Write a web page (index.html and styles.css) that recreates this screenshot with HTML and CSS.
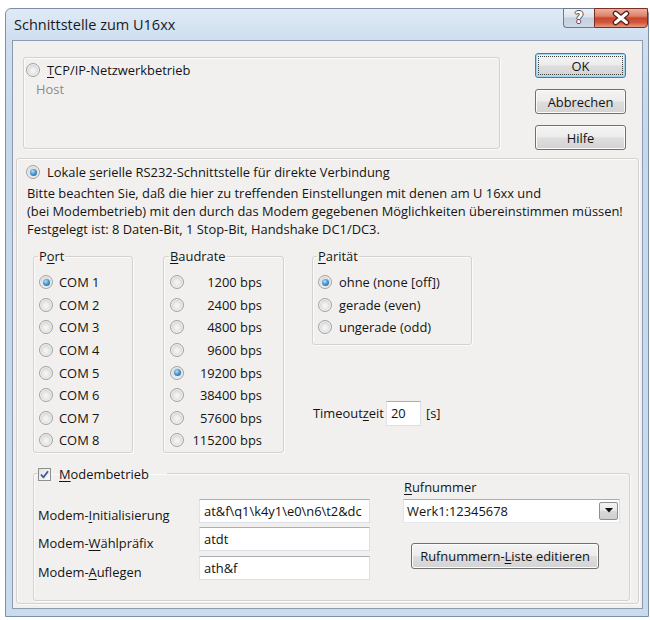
FILE: index.html
```html
<!DOCTYPE html>
<html lang="de">
<head>
<meta charset="utf-8">
<title>Schnittstelle zum U16xx</title>
<link rel="stylesheet" href="styles.css">
</head>
<body>
<div class="window">
  <div class="titlebar">
    <span class="caption">Schnittstelle zum U16xx</span>
    <div class="caption-buttons">
      <span class="cap-btn help"><span class="help-glyph">?</span></span>
      <span class="cap-btn close">
        <svg width="24" height="16" viewBox="0 0 24 16">
          <path d="M6.5 3.5 L17.5 12.5 M17.5 3.5 L6.5 12.5" stroke="#5b2218" stroke-width="5.6" stroke-linecap="round"/>
          <path d="M6.5 3.5 L17.5 12.5 M17.5 3.5 L6.5 12.5" stroke="#ffffff" stroke-width="3" stroke-linecap="round"/>
        </svg>
      </span>
    </div>
  </div>

  <div class="client">
    <div class="top-row">
      <div class="group tcp">
        <div class="opt"><span class="radio"></span><span><u>T</u>CP/IP-Netzwerkbetrieb</span></div>
        <div class="host">Host</div>
      </div>
      <div class="actions">
        <button class="btn default"><span class="focus-ring">OK</span></button>
        <button class="btn">Abbrechen</button>
        <button class="btn">Hilfe</button>
      </div>
    </div>

    <div class="group serial">
      <div class="opt"><span class="radio on"></span><span>Lokale <u>s</u>erielle RS232-Schnittstelle für direkte Verbindung</span></div>
      <p class="note">Bitte beachten Sie, daß die hier zu treffenden Einstellungen mit denen am U 16xx und<br>(bei Modembetrieb) mit den durch das Modem gegebenen Möglichkeiten übereinstimmen müssen!<br>Festgelegt ist: 8 Daten-Bit, 1 Stop-Bit, Handshake DC1/DC3.</p>

      <div class="settings">
        <fieldset class="box port">
          <legend>P<u>o</u>rt</legend>
          <div class="row"><span class="radio on"></span><span>COM 1</span></div>
          <div class="row"><span class="radio"></span><span>COM 2</span></div>
          <div class="row"><span class="radio"></span><span>COM 3</span></div>
          <div class="row"><span class="radio"></span><span>COM 4</span></div>
          <div class="row"><span class="radio"></span><span>COM 5</span></div>
          <div class="row"><span class="radio"></span><span>COM 6</span></div>
          <div class="row"><span class="radio"></span><span>COM 7</span></div>
          <div class="row"><span class="radio"></span><span>COM 8</span></div>
        </fieldset>

        <fieldset class="box baud">
          <legend><u>B</u>audrate</legend>
          <div class="row"><span class="radio"></span><span class="rate">1200 bps</span></div>
          <div class="row"><span class="radio"></span><span class="rate">2400 bps</span></div>
          <div class="row"><span class="radio"></span><span class="rate">4800 bps</span></div>
          <div class="row"><span class="radio"></span><span class="rate">9600 bps</span></div>
          <div class="row"><span class="radio on"></span><span class="rate">19200 bps</span></div>
          <div class="row"><span class="radio"></span><span class="rate">38400 bps</span></div>
          <div class="row"><span class="radio"></span><span class="rate">57600 bps</span></div>
          <div class="row"><span class="radio"></span><span class="rate">115200 bps</span></div>
        </fieldset>

        <div class="side">
          <fieldset class="box parity">
            <legend><u>P</u>arität</legend>
            <div class="row"><span class="radio on"></span><span>ohne (none [off])</span></div>
            <div class="row"><span class="radio"></span><span>gerade (even)</span></div>
            <div class="row"><span class="radio"></span><span>ungerade (odd)</span></div>
          </fieldset>
          <div class="timeout">
            <span class="timeout-label">Timeout<u>z</u>eit</span>
            <span class="field small">20</span>
            <span class="unit">[s]</span>
          </div>
        </div>
      </div>

      <fieldset class="box modem">
        <legend><span class="check"><svg width="11" height="11" viewBox="0 0 11 11"><path d="M2 5.5 L4.5 8.3 L9 2.2" fill="none" stroke="#3f5a93" stroke-width="1.8" stroke-linejoin="round"/></svg></span><span><u>M</u>odembetrieb</span></legend>
        <div class="modem-body">
          <div class="modem-fields">
            <span class="flabel">Modem-<u>I</u>nitialisierung</span>
            <span class="field">at&amp;f\q1\k4y1\e0\n6\t2&amp;dc</span>
            <span class="flabel">Modem-<u>W</u>ählpräfix</span>
            <span class="field">atdt</span>
            <span class="flabel">Modem-<u>A</u>uflegen</span>
            <span class="field">ath&amp;f</span>
          </div>
          <div class="dial">
            <span class="dial-label"><u>R</u>ufnummer</span>
            <div class="combo">
              <span class="combo-text">Werk1:12345678</span>
              <span class="combo-arrow"><svg width="8" height="5" viewBox="0 0 8 5"><path d="M0 0 H8 L4 4.5 Z" fill="#111"/></svg></span>
            </div>
            <button class="btn wide">Rufnummern-<u>L</u>iste editieren</button>
          </div>
        </div>
      </fieldset>
    </div>
  </div>
</div>
</body>
</html>
```

FILE: styles.css
```css
html, body {
  margin: 0;
  background: #ffffff;
}

body {
  font-family: "Open Sans", "Noto Sans", sans-serif;
  font-size: 12.9px;
  color: #141414;
}

u {
  text-decoration-thickness: 1px;
  text-underline-offset: 2px;
}

/* window frame */
.window {
  margin: 8px 0 0 5px;
  width: 644px;
  height: 609px;
  box-sizing: border-box;
  border: 1px solid #7d8fa6;
  border-radius: 6px 6px 0 0;
  background: linear-gradient(180deg, #dfeaf6 0, #cfdff0 30px, #c7d8ec 120px, #cadbee 100%);
  display: flex;
  flex-direction: column;
}

.titlebar {
  height: 31px;
  display: flex;
  align-items: flex-start;
  padding-left: 8px;
}

.caption {
  font-size: 14.5px;
  line-height: 31px;
  color: #1a1a1a;
}

.caption-buttons {
  margin-left: auto;
  margin-top: -1px;
  display: flex;
}

.cap-btn {
  height: 20px;
  box-sizing: border-box;
  display: flex;
  align-items: center;
  justify-content: center;
  border: 1px solid #6c7a8d;
}

.help {
  width: 31px;
  border-right: none;
  border-radius: 0 0 0 4px;
  background: linear-gradient(180deg, #eef2f7 0, #dbe3ed 45%, #c3cfdd 50%, #cfdae7 100%);
}

.help-glyph {
  font-family: "DejaVu Sans", sans-serif;
  font-weight: bold;
  font-size: 15px;
  line-height: 15px;
  color: #ffffff;
  text-shadow: 1px 0 0 #4a4f57, -1px 0 0 #4a4f57, 0 1px 0 #4a4f57, 0 -1px 0 #4a4f57;
}

.close {
  width: 54px;
  border-color: #7e2d20;
  border-radius: 0 0 4px 0;
  background: linear-gradient(180deg, #eab2a2 0, #dc8168 40%, #c9452c 50%, #d1583c 75%, #e79a7f 100%);
}

/* client area */
.client {
  flex: 1;
  margin: 0 5px 7px 6px;
  border: 1px solid #8c9cb0;
  background: #f2f0ee;
  padding: 0 3px 4px 3px;
  display: flex;
  flex-direction: column;
}

.group {
  box-sizing: border-box;
  border: 1px solid #d4d2ce;
  border-radius: 3px;
  box-shadow: inset 1px 1px 0 #fbfbfa, 1px 1px 0 #fbfbfa;
}

.top-row {
  height: 117px;
  display: flex;
  align-items: flex-start;
}

.tcp {
  width: 477px;
  height: 92px;
  margin: 16px 0 0 7px;
  padding: 3px 2px;
}

.opt {
  display: flex;
  align-items: center;
  gap: 7px;
  line-height: 18px;
  white-space: nowrap;
}

.host {
  color: #8b8b8b;
  margin: 1px 0 0 10px;
  line-height: 18px;
}

.actions {
  margin: 12px 13px 0 auto;
  display: flex;
  flex-direction: column;
  gap: 11px;
}

.btn {
  font: inherit;
  color: #141414;
  width: 91px;
  height: 25px;
  padding: 0;
  box-sizing: border-box;
  border: 1px solid #707070;
  border-radius: 3px;
  background: linear-gradient(180deg, #f4f4f4 0, #ececec 48%, #dedede 52%, #d3d3d3 100%);
  box-shadow: inset 0 0 0 1px #fbfbfb;
  display: flex;
  align-items: center;
  justify-content: center;
}

.btn.default {
  border-color: #3c7fb1;
  box-shadow: inset 0 0 0 1px #a4d3ee;
  padding: 2px;
}

.focus-ring {
  flex: 1;
  align-self: stretch;
  display: flex;
  align-items: center;
  justify-content: center;
  border: 1px dotted #3d3d3d;
}

/* serial interface section */
.serial {
  flex: 1;
  margin-top: 0;
  padding: 4px 4px 0 9px;
  display: flex;
  flex-direction: column;
}

.note {
  margin: 3px 0 0 1px;
  line-height: 18px;
  white-space: nowrap;
}

.settings {
  display: flex;
  align-items: flex-start;
  margin: 10px 0 0 7px;
}

.box {
  margin: 0;
  min-width: 0;
  box-sizing: border-box;
  border: 1px solid #d4d2ce;
  border-radius: 3px;
  box-shadow: inset 1px 1px 0 #fbfbfa, 1px 1px 0 #fbfbfa;
  padding: 7px 4px 0 5px;
}

.box legend {
  padding: 0 1px;
  margin-left: -1px;
  line-height: 16px;
}

.row {
  height: 22.6px;
  display: flex;
  align-items: center;
  gap: 6px;
  white-space: nowrap;
}

.port {
  width: 100px;
}

.baud {
  width: 121px;
  margin-left: 30px;
  padding-left: 6px;
}

.baud .row {
  gap: 8px;
}

.rate {
  width: 70px;
  text-align: right;
}

.side {
  margin-left: 28px;
  display: flex;
  flex-direction: column;
}

.parity {
  width: 160px;
  padding-bottom: 5px;
}

.parity .row {
  gap: 7px;
}

.timeout {
  margin: 56px 0 0 1px;
  display: flex;
  align-items: center;
  height: 25px;
}

.timeout-label {
  width: 70px;
  margin-right: 3px;
  white-space: nowrap;
}

.field {
  box-sizing: border-box;
  height: 24px;
  background: #ffffff;
  border: 1px solid #dbdfe6;
  border-top-color: #abadb3;
  border-left-color: #e2e3ea;
  padding: 0 4px;
  display: flex;
  align-items: center;
  white-space: nowrap;
  overflow: hidden;
  color: #111;
}

.field.small {
  width: 35px;
  height: 25px;
}

.unit {
  margin-left: 5px;
}

/* radio buttons and checkbox */
.radio {
  flex: none;
  width: 14px;
  height: 14px;
  box-sizing: border-box;
  border-radius: 50%;
  border: 1px solid #a3a3a3;
  background: radial-gradient(circle at 50% 55%, #f7f7f7 0, #ebebeb 3px, #d9d9d9 5px, #cdcdcd 7px);
  box-shadow: inset 0 0 0 1px #f3f3f3;
  display: inline-flex;
  align-items: center;
  justify-content: center;
}

.radio.on::after {
  content: "";
  width: 7px;
  height: 7px;
  border-radius: 50%;
  background: radial-gradient(circle at 40% 35%, #b7e3fb 0, #4c98d3 45%, #1c578f 100%);
}

.check {
  width: 13px;
  height: 13px;
  box-sizing: border-box;
  border: 1px solid #8e8f8f;
  background: linear-gradient(135deg, #e4e4e4, #f8f8f8);
  display: inline-flex;
  align-items: center;
  justify-content: center;
  vertical-align: middle;
  margin: -2px 8px 0 0;
}

/* modem section */
.modem {
  margin: 13px 4px 0 7px;
  padding: 0 4px 20px 4px;
}

.modem legend {
  padding: 0 18px 0 0;
  margin-left: 0;
}

.modem-body {
  display: flex;
  align-items: flex-start;
}

.modem-fields {
  margin-top: 17px;
  display: grid;
  grid-template-columns: 161px 171px;
  row-gap: 4.5px;
}

.flabel {
  margin-top: 8px;
  line-height: 16px;
  white-space: nowrap;
}

.dial {
  margin: -3px 0 0 33px;
  width: 217px;
  display: flex;
  flex-direction: column;
  align-items: flex-start;
}

.dial-label {
  line-height: 16px;
  margin-left: 1px;
}

.combo {
  margin-top: 4px;
  width: 217px;
  height: 24px;
  box-sizing: border-box;
  background: #ffffff;
  border: 1px solid #abadb3;
  border-color: #abadb3 #dbdfe6 #e3e9ef #e2e3ea;
  display: flex;
  align-items: center;
  padding: 2px 1px 2px 2px;
}

.combo-text {
  flex: 1;
  padding-left: 1px;
}

.combo-arrow {
  width: 19px;
  height: 18px;
  box-sizing: border-box;
  border: 1px solid #8f8f8f;
  border-radius: 2px;
  background: linear-gradient(180deg, #f3f3f3 0, #e7e7e7 50%, #d8d8d8 51%, #cfcfcf 100%);
  display: flex;
  align-items: center;
  justify-content: center;
}

.btn.wide {
  width: 188px;
  height: 26px;
  margin: 20px 0 0 8px;
}
```
